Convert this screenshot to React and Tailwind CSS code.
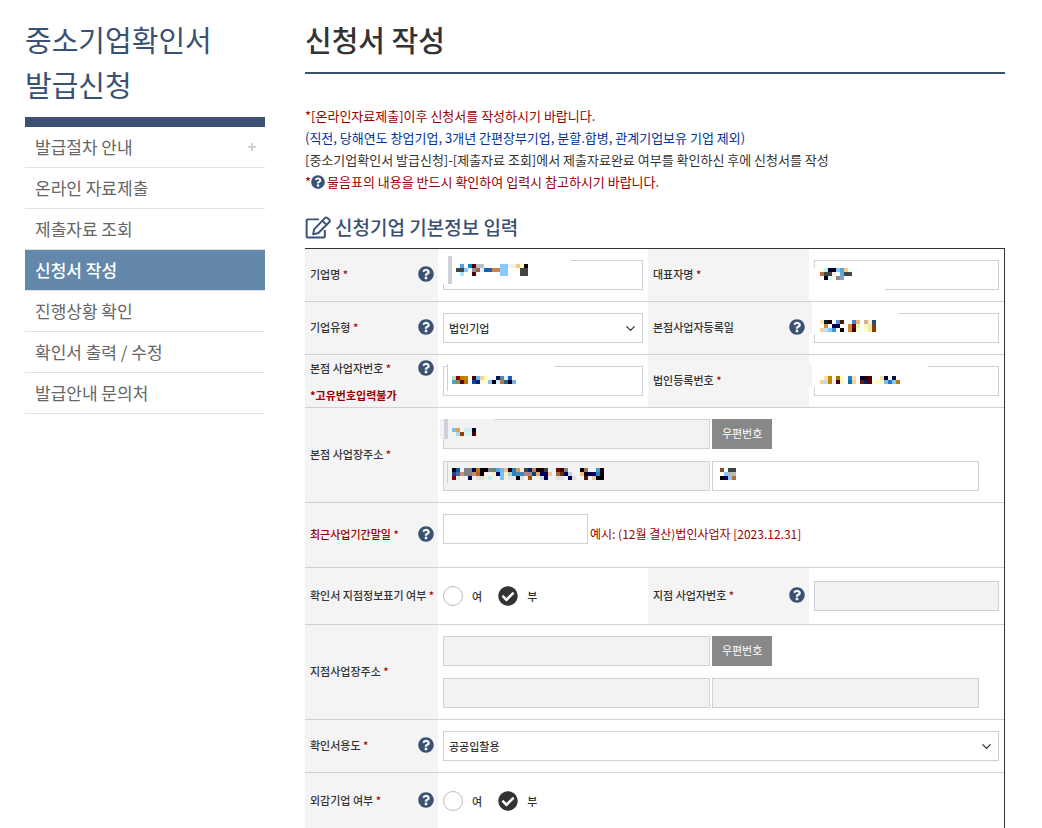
import { ChevronDown } from 'lucide-react'
import { FaCheckCircle, FaQuestionCircle } from 'react-icons/fa'

const menu = [
  { label: '발급절차 안내', expandable: true },
  { label: '온라인 자료제출' },
  { label: '제출자료 조회' },
  { label: '신청서 작성', active: true },
  { label: '진행상황 확인' },
  { label: '확인서 출력 / 수정' },
  { label: '발급안내 문의처' },
]

// Redacted values. Each row is a list of 4px cells, "-" is an empty cell.
// patches are [x, y, width, height, fill] relative to the field.
const masks = {
  company: {
    x: 13,
    y: 4,
    patches: [
      [-1, -5, 129, 29, '#fff'],
      [5, -4, 4, 28, '#ccd0d9'],
    ],
    rows: [
      '- 4da6ea - 0084d0 500000 bfbfbf bfbfbf - - - - 84caff 84caff f0f0f0 f0f0f0 ffc884 ffffc8 180000',
      '454545 454545 84caff f0faff 9a8a8e 946448 e0f4ff 1a5fb0 1a5fb0 cc8440 cc8440 84caff 84caff - fffff0 - 454545 454545',
      '- a8e6ff - - 500000 - - - - - - 84caff 84caff - - - 454545 454545',
    ],
  },
  ceo: {
    x: 6,
    y: 8,
    patches: [[-2, 8, 73, 23, '#fff']],
    rows: [
      'ffffe0 c0f4f8 000038 000018 84caff 4da6e0 ffc884 e8ffff',
      'b87444 454545 454545 f0f0f0 - 5aaae4 454545 454545',
      '- 000018 d0ffff ffffe0 8a8a8e 8a9cc8',
    ],
  },
  openDate: {
    x: 6,
    y: 7,
    patches: [
      [-2, -5, 86, 26, '#fff'],
      [-5, -11, 3, 32, '#f4f4f4'],
    ],
    rows: [
      'ffe4b8 001828 180000 - 5a94d4 4a1c00 - fffff0 4884c4 f0b070 - d0b090 fff0d0 1c4c84',
      '- d48c30 - 000060 000048 - - d48c30 700000 d8ffb8 - fff8c0 f0e8b0 7c4010',
      'f8d098 c0e0f0 84caff 3c94d8 - 000000 - d48c30 400020 ffffc0 - ffffc8 f0e8b0 903c00',
    ],
  },
  bizNo: {
    x: 9,
    y: 10,
    patches: [
      [4, -2, 108, 27, '#fff'],
      [4, -2, 1, 27, '#ccd0d9'],
    ],
    rows: [
      'b8dcb8 880000 c87800 c88400 - 400000 6cb0f0 e8d8a0 ffffb8 - - 001850 6c8098 e0f0ff 1c60b0 fffff0',
      '4ca0dc 84984c 580818 b87400 - 0048a0 002878 fff8d8 ffffd0 84c0f0 000018 d0f0ff b87838 1c6098 000030 74b4e8',
    ],
  },
  corpNo: {
    x: 6,
    y: 10,
    patches: [
      [-2, -3, 116, 24, '#fff'],
      [-5, -3, 3, 24, '#f4f4f4'],
    ],
    rows: [
      '- ffe0a0 c88400 - b86c00 ffffc0 - 1c84cc ffe0a8 - 000038 300000 480000 - - e8e0a8 000038 - 001450',
      'f8d098 b8dcf0 c88400 f0f0f8 400018 fff8c0 - 0078b8 f8d098 - 681c00 001c70 580000 ffffe0 ffffc0 fff8c8 84b8e8 2478c8 84caff c07800',
    ],
  },
  zip: {
    x: 9,
    y: 9,
    patches: [
      [-3, 0, 55, 20, '#f2f2f2'],
      [1, 0, 4, 20, '#ccd0d9'],
    ],
    rows: [
      '7cbcf0 e0a048 - c8f0f0 c8f0f0 000020',
      '- a8d8f0 984000 d0f4f0 d0f4f0 480000',
    ],
  },
  address: {
    x: 9,
    y: 7,
    patches: [[4, 2, 1, 20, '#ccd0d9']],
    rows: [
      '000000 0058a8 - 808084 808084 000058 c07800 000000 000000 808080 648484 58a4e0 74bcf4 f0c080 200010 1c84c8 d89848 f0f0d8 404040 001c80 c08040 180000 180000 404040 - e0f4f8 780000 400000 808080 - - - 000000 a07050 e8f4f8 - 4898d4 180000',
      '20408c 4868a8 c89080 808084 808084 c08c68 b06420 000000 - - f8f4c0 000060 7cc0f4 f0f0d8 b0d0c0 1c84c8 4088b8 4088b8 b08088 b08088 004868 e8a870 000060 000060 f0c898 - a06840 603010 000058 b8d4f0 - - f0c080 180000 000050 000060 1c84c8 000000',
      '780000 e8e8e8 - - 000058 - e0e0e0 e0e0e0 f0f0d8 b8f4f0 - - 7cc0f4 f0f0d8 e4e4e4 e4e4e4 000000 e0e0e0 - a05000 - - c8e0e8 000058 - - e0e0e0 e0e0e0 - 000058 e0e0e0 - - 481c00 - f0c898 000000 000000',
    ],
  },
  addressDetail: {
    x: 8,
    y: 7,
    patches: [],
    rows: [
      '884c20 f0ffff 404040 404040',
      '- 84caff b8b8b8 b8b8b8',
      '000000 000058 8cc8f0 b07030',
    ],
  },
}

function EditIcon() {
  return (
    <svg
      className="w-[26px] h-[23px]"
      viewBox="0 0 80 70"
      fill="none"
      stroke="currentColor"
      strokeWidth="6"
      strokeLinejoin="round"
      aria-hidden="true"
    >
      <path d="M43 10H8Q5 10 5 13V63Q5 66 8 66H58Q61 66 61 63V43" />
      <path d="M25 56L28 41L61 6Q65 2 69 6L75 11Q78 15 75 18L41 52Z" />
      <path d="M53 14L67 27" />
    </svg>
  )
}

function Mask({ x, y, patches, rows }) {
  return (
    <svg
      className="absolute top-0 left-0 w-full h-full overflow-visible pointer-events-none"
      shapeRendering="crispEdges"
      aria-hidden="true"
    >
      {patches.map(([px, py, w, h, fill], i) => (
        <rect key={i} x={px} y={py} width={w} height={h} fill={fill} />
      ))}
      {rows.map((row, r) =>
        row
          .split(' ')
          .map((c, i) =>
            c === '-' ? null : (
              <rect key={`${r}-${i}`} x={x + i * 4} y={y + r * 4} width="4" height="4" fill={`#${c}`} />
            )
          )
      )}
    </svg>
  )
}

function Field({ id, label, mask, readOnly, className = 'w-full' }) {
  return (
    <div className={`relative ${className}`}>
      <input
        id={id}
        type="text"
        aria-label={label}
        readOnly={readOnly}
        className={`block w-full h-[30px] px-[5px] border border-[#ccd0d9] text-[11px] outline-none ${readOnly ? 'bg-[#f2f2f2]' : 'bg-white'}`}
      />
      {mask && <Mask {...mask} />}
    </div>
  )
}

function Select({ id, options }) {
  return (
    <div className="relative">
      <select
        id={id}
        className="block w-full h-[30px] pl-[5px] pr-8 border border-[#ccd0d9] bg-white text-[11px] font-medium appearance-none outline-none"
      >
        {options.map((o) => (
          <option key={o}>{o}</option>
        ))}
      </select>
      <ChevronDown
        size={15}
        strokeWidth={2}
        className="absolute right-[5px] top-[8px] pointer-events-none"
      />
    </div>
  )
}

function Radio({ name, label, defaultChecked }) {
  return (
    <label className="flex items-center gap-[9px] text-[11px] font-medium">
      <span className="relative block w-5 h-5">
        <input
          type="radio"
          name={name}
          defaultChecked={defaultChecked}
          className="peer block w-5 h-5 appearance-none rounded-full border border-[#bbb] bg-white checked:border-transparent"
        />
        <FaCheckCircle
          size={20}
          className="absolute inset-0 hidden peer-checked:block pointer-events-none text-[#333]"
        />
      </span>
      {label}
    </label>
  )
}

function YesNo({ name }) {
  return (
    <div className="flex items-center gap-4">
      <Radio name={name} label="여" />
      <Radio name={name} label="부" defaultChecked />
    </div>
  )
}

function Head({ htmlFor, help, required, red, note, children }) {
  return (
    <th
      scope="row"
      className="pl-[5px] pr-1 pb-[2px] bg-[#f4f4f4] border-b border-[#ccd0d9] text-left align-middle text-[11px] leading-[22px] font-medium whitespace-nowrap"
    >
      <div className={`flex items-center justify-between ${red ? 'text-[#990000]' : ''}`}>
        <label htmlFor={htmlFor}>
          {children}
          {required && <span className="text-[#990000]"> *</span>}
        </label>
        {help && (
          <button type="button" aria-label="도움말" className="text-[#3a5173]">
            <FaQuestionCircle size={16} />
          </button>
        )}
      </div>
      {note && <p className="mt-2 leading-4 text-[#990000] font-bold">{note}</p>}
    </th>
  )
}

function Cell({ colSpan, className = 'h-[53px] align-middle', children }) {
  return (
    <td colSpan={colSpan} className={`px-[5px] py-[11px] border-b border-[#ccd0d9] ${className}`}>
      {children}
    </td>
  )
}

function Address({ prefix, id, zipMask, addressMask, detailMask, detailReadOnly }) {
  return (
    <div className="flex flex-col gap-3">
      <div className="flex gap-[2px]">
        <Field id={id} label={`${prefix} 우편번호`} mask={zipMask} readOnly className="w-[48%]" />
        <button
          type="button"
          className="h-[30px] px-[10px] pb-[2px] bg-[#888] text-white text-[11px] leading-4"
        >
          우편번호
        </button>
      </div>
      <div className="flex gap-[2px]">
        <Field label={`${prefix} 주소`} mask={addressMask} readOnly className="w-[48%]" />
        <Field
          label={`${prefix} 상세주소`}
          mask={detailMask}
          readOnly={detailReadOnly}
          className="w-[48%]"
        />
      </div>
    </div>
  )
}

function Sidebar() {
  return (
    <aside className="w-60 shrink-0">
      <h2 className="text-[29px] leading-[45px] text-[#3a5173]">
        중소기업확인서
        <br />
        발급신청
      </h2>
      <nav className="mt-[10px] border-t-[10px] border-[#3a5173]">
        <ul>
          {menu.map((item) => (
            <li key={item.label} className="border-b border-[#e2e2e2]">
              <a
                href="#"
                className={`flex items-center justify-between h-10 px-[9px] pl-[10px] text-[17px] ${item.active ? 'bg-[#6388a9] text-white font-medium' : 'text-[#666]'}`}
              >
                {item.label}
                {item.expandable && (
                  <svg className="w-2 h-2 text-[#ccd0d9]" viewBox="0 0 8 8" aria-hidden="true">
                    <path d="M4 0v8M0 4h8" stroke="currentColor" strokeWidth="2" />
                  </svg>
                )}
              </a>
            </li>
          ))}
        </ul>
      </nav>
    </aside>
  )
}

export default function App() {
  return (
    <div className="flex gap-10 h-screen overflow-hidden pt-[17px] pl-[25px] pr-[37px] bg-white text-[#333] font-['Noto_Sans_CJK_KR',sans-serif]">
      <Sidebar />

      <main className="flex-1 min-w-0">
        <h1 className="pb-[10px] border-b-2 border-[#3a5173] text-[29px] leading-[45px] font-medium">
          신청서 작성
        </h1>

        {/* Notice */}
        <div className="mt-[31px] text-[13px] leading-[22px] text-[#990000]">
          <p>*[온라인자료제출]이후 신청서를 작성하시기 바랍니다.</p>
          <p className="text-[#003399]">
            (직전, 당해연도 창업기업, 3개년 간편장부기업, 분할.합병, 관계기업보유 기업 제외)
          </p>
          <p className="text-[#333]">
            [중소기업확인서 발급신청]-[제출자료 조회]에서 제출자료완료 여부를 확인하신 후에 신청서를 작성
          </p>
          <p className="flex items-center">
            *<FaQuestionCircle size={14} className="mr-[2px] text-[#3a5173]" />
            물음표의 내용을 반드시 확인하여 입력시 참고하시기 바랍니다.
          </p>
        </div>

        <h2 className="flex items-center gap-1 mt-[19px] mb-[6px] text-[19px] leading-[30px] font-medium text-[#3a5173]">
          <EditIcon />
          신청기업 기본정보 입력
        </h2>

        <table className="w-full table-fixed border-separate border-spacing-0 border-t border-r border-[#333]">
          <colgroup>
            <col className="w-[133px]" />
            <col className="w-[210px]" />
            <col className="w-[161px]" />
            <col />
          </colgroup>
          <tbody>
            <tr>
              <Head htmlFor="company" required help>기업명</Head>
              <Cell>
                <Field id="company" mask={masks.company} />
              </Cell>
              <Head htmlFor="ceo" required>대표자명</Head>
              <Cell>
                <Field id="ceo" mask={masks.ceo} />
              </Cell>
            </tr>
            <tr>
              <Head htmlFor="companyType" required help>기업유형</Head>
              <Cell>
                <Select id="companyType" options={['법인기업']} />
              </Cell>
              <Head htmlFor="openDate" help>본점사업자등록일</Head>
              <Cell>
                <Field id="openDate" mask={masks.openDate} />
              </Cell>
            </tr>
            <tr>
              <Head htmlFor="bizNo" required help note="*고유번호입력불가">본점 사업자번호</Head>
              <Cell>
                <Field id="bizNo" mask={masks.bizNo} />
              </Cell>
              <Head htmlFor="corpNo" required>법인등록번호</Head>
              <Cell>
                <Field id="corpNo" mask={masks.corpNo} />
              </Cell>
            </tr>
            <tr>
              <Head htmlFor="hqZip" required>본점 사업장주소</Head>
              <Cell colSpan={3}>
                <Address
                  prefix="본점"
                  id="hqZip"
                  zipMask={masks.zip}
                  addressMask={masks.address}
                  detailMask={masks.addressDetail}
                />
              </Cell>
            </tr>
            <tr>
              <Head htmlFor="periodEnd" required help red>최근사업기간말일</Head>
              <Cell colSpan={3} className="h-[65px] align-top">
                <div className="flex items-center gap-[2px] text-[12px] text-[#990000]">
                  <Field id="periodEnd" className="w-[145px]" />
                  <span className="pt-[10px]">예시: (12월 결산)법인사업자 [2023.12.31]</span>
                </div>
              </Cell>
            </tr>
            <tr>
              <Head required>확인서 지점정보표기 여부</Head>
              <Cell className="h-[57px] align-middle">
                <YesNo name="branchInfo" />
              </Cell>
              <Head htmlFor="branchNo" required help>지점 사업자번호</Head>
              <Cell className="h-[57px] align-middle">
                <Field id="branchNo" readOnly />
              </Cell>
            </tr>
            <tr>
              <Head htmlFor="branchZip" required>지점사업장주소</Head>
              <Cell colSpan={3}>
                <Address prefix="지점" id="branchZip" detailReadOnly />
              </Cell>
            </tr>
            <tr>
              <Head htmlFor="usage" required help>확인서용도</Head>
              <Cell colSpan={3}>
                <Select id="usage" options={['공공입찰용']} />
              </Cell>
            </tr>
            <tr>
              <Head required help>외감기업 여부</Head>
              <Cell colSpan={3} className="h-[57px] align-middle">
                <YesNo name="audited" />
              </Cell>
            </tr>
          </tbody>
        </table>
      </main>
    </div>
  )
}
